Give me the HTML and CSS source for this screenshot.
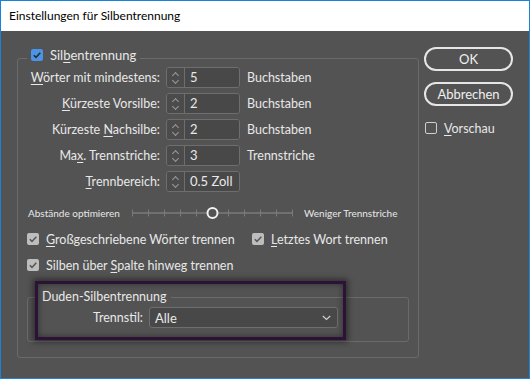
FILE: index.html
```html
<!DOCTYPE html>
<html lang="de">
<head>
    <meta charset="UTF-8">
    <title>Einstellungen für Silbentrennung</title>
    <link rel="stylesheet" href="styles.css">
</head>
<body>
    <div class="window">
        <div class="titlebar">Einstellungen für Silbentrennung</div>
        <div class="dialog">
            <div class="group main-group">
                <div class="group-title">
                    <span class="check check-blue">
                        <svg viewBox="0 0 12 12" width="12" height="12"><path d="M2.8 6.2 L5 8.4 L9.3 3.8" fill="none" stroke="#2b2b2b" stroke-width="1.6"/></svg>
                    </span>
                    <span>Sil<u>b</u>entrennung</span>
                </div>

                <div class="fields">
                    <label><u>W</u>örter mit mindestens:</label>
                    <div class="spin"><span class="arrows"></span><span class="value">5</span></div>
                    <span class="unit">Buchstaben</span>

                    <label><u>K</u>ürzeste Vorsilbe:</label>
                    <div class="spin"><span class="arrows"></span><span class="value">2</span></div>
                    <span class="unit">Buchstaben</span>

                    <label>Kürzeste <u>N</u>achsilbe:</label>
                    <div class="spin"><span class="arrows"></span><span class="value">2</span></div>
                    <span class="unit">Buchstaben</span>

                    <label>Ma<u>x</u>. Trennstriche:</label>
                    <div class="spin"><span class="arrows"></span><span class="value">3</span></div>
                    <span class="unit">Trennstriche</span>

                    <label><u>T</u>rennbereich:</label>
                    <div class="spin"><span class="arrows"></span><span class="value">0.5 Zoll</span></div>
                    <span class="unit"></span>
                </div>

                <div class="slider-row">
                    <span class="slider-label">Abstände optimieren</span>
                    <svg class="slider" width="162" height="14" viewBox="0 0 162 14">
                        <line x1="0.5" y1="7" x2="160.5" y2="7" stroke="#7a7a7a" stroke-width="1.5"/>
                        <g stroke="#7a7a7a" stroke-width="1">
                            <line x1="0.5" y1="3.5" x2="0.5" y2="10.5"/>
                            <line x1="16.5" y1="3.5" x2="16.5" y2="10.5"/>
                            <line x1="32.5" y1="3.5" x2="32.5" y2="10.5"/>
                            <line x1="48.5" y1="3.5" x2="48.5" y2="10.5"/>
                            <line x1="64.5" y1="3.5" x2="64.5" y2="10.5"/>
                            <line x1="96.5" y1="3.5" x2="96.5" y2="10.5"/>
                            <line x1="112.5" y1="3.5" x2="112.5" y2="10.5"/>
                            <line x1="128.5" y1="3.5" x2="128.5" y2="10.5"/>
                            <line x1="144.5" y1="3.5" x2="144.5" y2="10.5"/>
                            <line x1="160.5" y1="3.5" x2="160.5" y2="10.5"/>
                        </g>
                        <circle cx="80.5" cy="7" r="5" fill="#535353" stroke="#f2f2f2" stroke-width="2"/>
                    </svg>
                    <span class="slider-label right">Weniger Trennstriche</span>
                </div>

                <div class="check-row">
                    <span class="check-item wide">
                        <span class="check check-gray">
                            <svg viewBox="0 0 12 12" width="12" height="12"><path d="M2.8 6.2 L5 8.4 L9.3 3.8" fill="none" stroke="#555" stroke-width="1.5"/></svg>
                        </span>
                        <span><u>G</u>roßgeschriebene Wörter trennen</span>
                    </span>
                    <span class="check-item">
                        <span class="check check-gray">
                            <svg viewBox="0 0 12 12" width="12" height="12"><path d="M2.8 6.2 L5 8.4 L9.3 3.8" fill="none" stroke="#555" stroke-width="1.5"/></svg>
                        </span>
                        <span><u>L</u>etztes Wort trennen</span>
                    </span>
                </div>
                <div class="check-row">
                    <span class="check-item">
                        <span class="check check-gray">
                            <svg viewBox="0 0 12 12" width="12" height="12"><path d="M2.8 6.2 L5 8.4 L9.3 3.8" fill="none" stroke="#555" stroke-width="1.5"/></svg>
                        </span>
                        <span>Silben über <u>S</u>palte hinweg trennen</span>
                    </span>
                </div>

                <div class="group duden-group">
                    <div class="group-title">Duden-Silbentrennung</div>
                    <div class="duden-row">
                        <label>Trennstil:</label>
                        <div class="select">
                            <span>Alle</span>
                            <svg width="9" height="6" viewBox="0 0 9 6"><path d="M0.8 1 L4.5 4.5 L8.2 1" fill="none" stroke="#cfcfcf" stroke-width="1.2"/></svg>
                        </div>
                    </div>
                    <div class="highlight"></div>
                </div>
            </div>

            <div class="side">
                <button class="btn">OK</button>
                <button class="btn">Abbrechen</button>
                <div class="check-item preview">
                    <span class="check check-empty"></span>
                    <span><u>V</u>orschau</span>
                </div>
            </div>
        </div>
    </div>
</body>
</html>
```

FILE: styles.css
```css
* {
    margin: 0;
    padding: 0;
    box-sizing: border-box;
}

body {
    font-family: 'Lato', 'Noto Sans', sans-serif;
    font-size: 12.5px;
    color: #e8e8e8;
    background-color: #535353;
}

u {
    text-decoration: underline;
    text-underline-offset: 2px;
}

.window {
    width: 530px;
    height: 379px;
    border: 1px solid #1883d7;
    background-color: #535353;
    overflow: hidden;
}

.titlebar {
    height: 30px;
    line-height: 30px;
    padding-left: 8px;
    background-color: #fff;
    color: #000;
    font-size: 12px;
}

.dialog {
    display: flex;
    align-items: flex-start;
}

.group {
    border: 1px solid #6b6b6b;
    border-radius: 3px;
}

.group-title {
    display: flex;
    align-items: center;
    gap: 7px;
    width: max-content;
    height: 16px;
    padding: 0 4px;
    background-color: #535353;
}

.main-group {
    width: 402px;
    height: 300px;
    margin: 27px 0 0 16px;
}

.main-group > .group-title {
    margin: -12px 0 0 9px;
    font-size: 13px;
}

.check {
    display: inline-flex;
    width: 12px;
    height: 12px;
    border-radius: 2px;
    flex-shrink: 0;
}

.check-blue {
    background-color: #4a93e6;
}

.check-gray {
    background-color: #bdbdbd;
}

.check-empty {
    border: 1px solid #cfcfcf;
}

/* number rows */
.fields {
    display: grid;
    grid-template-columns: 142px 74px auto;
    grid-auto-rows: 21px;
    column-gap: 6px;
    row-gap: 5px;
    margin-top: 4px;
    align-items: center;
}

.fields label {
    text-align: right;
}

.unit {
    padding-left: 1px;
}

.spin {
    display: flex;
    height: 21px;
    border: 1px solid #6e6e6e;
    border-radius: 3px;
    overflow: hidden;
}

.arrows {
    position: relative;
    width: 18px;
    border-right: 1px solid #6e6e6e;
    background-color: #4b4b4b;
}

.arrows::before,
.arrows::after {
    content: '';
    position: absolute;
    left: 6px;
    width: 4px;
    height: 4px;
    border-left: 1px solid #9a9a9a;
    border-top: 1px solid #9a9a9a;
}

.arrows::before {
    top: 5px;
    transform: rotate(45deg);
}

.arrows::after {
    top: 10px;
    transform: rotate(225deg);
}

.value {
    flex: 1;
    padding-left: 5px;
    line-height: 19px;
    font-size: 13px;
    background-color: #484848;
}

/* slider */
.slider-row {
    display: flex;
    align-items: center;
    height: 20px;
    margin-top: 11px;
    padding-left: 10px;
}

.slider-label {
    width: 104px;
    font-size: 10px;
}

.slider-label.right {
    width: auto;
    margin-left: 10px;
}

/* checkboxes */
.check-row {
    display: flex;
    height: 20px;
    margin-top: 6px;
    padding-left: 9px;
}

.check-item {
    display: inline-flex;
    align-items: center;
    gap: 7px;
}

.check-item.wide {
    width: 225px;
}

/* duden */
.duden-group {
    position: relative;
    width: 382px;
    margin: 22px 0 0 9px;
    padding-bottom: 13px;
}

.duden-group > .group-title {
    margin: -10px 0 0 10px;
}

.duden-row {
    display: flex;
    align-items: center;
    gap: 6px;
    margin-top: 3px;
}

.duden-row label {
    width: 115px;
    text-align: right;
}

.select {
    display: flex;
    align-items: center;
    justify-content: space-between;
    width: 189px;
    height: 21px;
    padding: 0 6px 0 5px;
    border: 1px solid #6e6e6e;
    border-radius: 3px;
    background-color: #484848;
    font-size: 13px;
}

.highlight {
    position: absolute;
    left: 7px;
    top: -17px;
    width: 311px;
    height: 59px;
    border: 3px solid #2c1236;
    box-shadow: 0 0 6px 2px rgba(0, 0, 0, 0.45), inset 0 0 6px rgba(0, 0, 0, 0.45);
    pointer-events: none;
}

/* right column */
.side {
    display: flex;
    flex-direction: column;
    width: 89px;
    margin: 16px 0 0 5px;
}

.btn {
    height: 24px;
    margin-bottom: 11px;
    border: 2px solid #e6e6e6;
    border-radius: 12px;
    background-color: #535353;
    color: #f0f0f0;
    font-family: inherit;
    font-size: 13px;
}

.preview {
    margin: 3px 0 0 1px;
    height: 16px;
}
```
